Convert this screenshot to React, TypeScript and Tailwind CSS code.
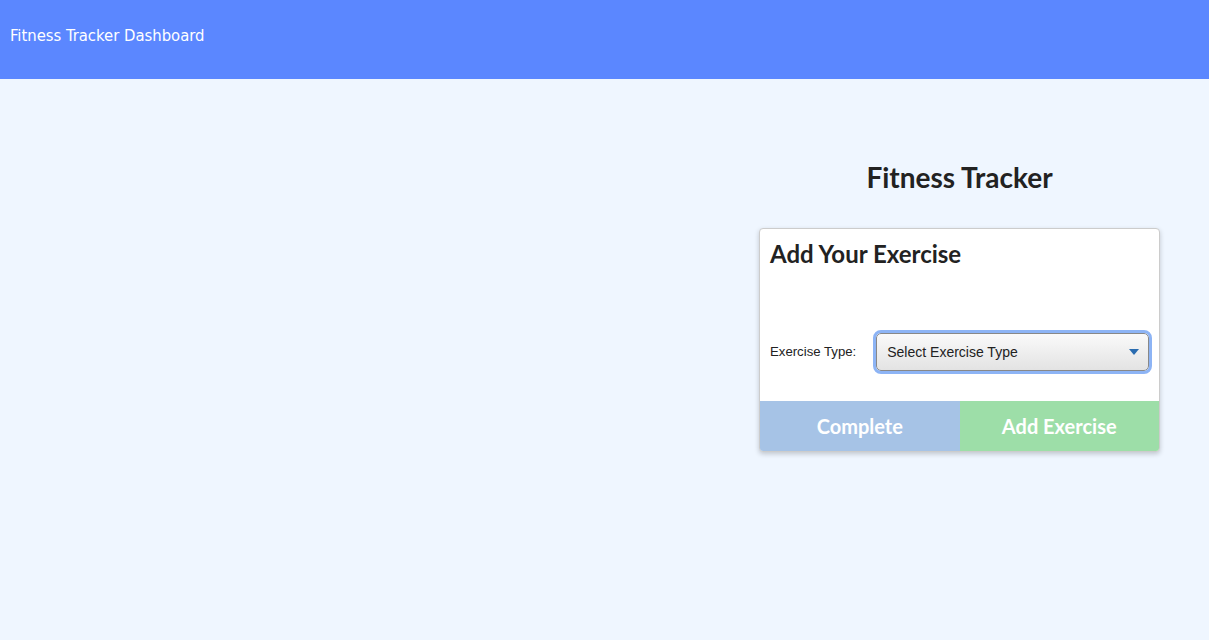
import React from 'react'

export default function App() {
  const [exercise, setExercise] = React.useState('')

  return (
    <div className="min-h-[640px] bg-[#eff6ff]">
      <header className="h-[79px] bg-[#5b87ff] px-[10px] pt-[23px]">
        <span className="text-[16.5px] text-white [font-family:'DejaVu_Sans_Condensed','DejaVu_Sans',sans-serif]">
          Fitness Tracker Dashboard
        </span>
      </header>

      <main className="flex">
        <div className="flex-1" />
        <div className="flex w-[499px] flex-col items-center pt-[79px]">
          <h1 className="text-[28px] font-bold leading-[38px] text-[#222] [font-family:Lato,sans-serif]">
            Fitness Tracker
          </h1>

          <div className="mt-[32px] w-[401px] overflow-hidden rounded-[4px] border border-[#ccc] bg-white shadow-[0_2px_5px_rgba(0,0,0,0.2)]">
            <div className="px-[10px] pt-[9px] pb-[30px]">
              <h2 className="text-[24px] font-bold leading-[32px] text-[#222] [font-family:Lato,sans-serif]">
                Add Your Exercise
              </h2>

              <div className="mt-[63px] flex items-center gap-[20px] [font-family:'Liberation_Sans',Arial,sans-serif]">
                <label htmlFor="type" className="text-[13.2px] text-[#222]">
                  Exercise Type:
                </label>
                <div className="relative flex-1">
                  <select
                    id="type"
                    value={exercise}
                    onChange={(e) => setExercise(e.target.value)}
                    className="h-[38px] w-full appearance-none rounded-[5px] border border-[#888] bg-gradient-to-b from-[#fafafa] to-[#e3e3e3] pl-[10px] text-[14px] text-[#222] outline outline-[3px] outline-[#8db4f5]"
                  >
                    <option value="">Select Exercise Type</option>
                    <option value="cardio">Cardio</option>
                    <option value="resistance">Resistance</option>
                  </select>
                  <svg
                    className="pointer-events-none absolute right-[10px] top-[16px]"
                    width="10"
                    height="6"
                    viewBox="0 0 10 6"
                  >
                    <path d="M0 0 L10 0 L5 6 Z" fill="#2a6cb0" />
                  </svg>
                </div>
              </div>
            </div>

            <div className="flex h-[50px] [font-family:Lato,sans-serif]">
              <button className="flex-1 bg-[#a6c3e6] text-[20px] font-bold text-white">Complete</button>
              <button className="flex-1 bg-[#9ddea8] text-[20px] font-bold text-white">Add Exercise</button>
            </div>
          </div>
        </div>
      </main>
    </div>
  )
}
